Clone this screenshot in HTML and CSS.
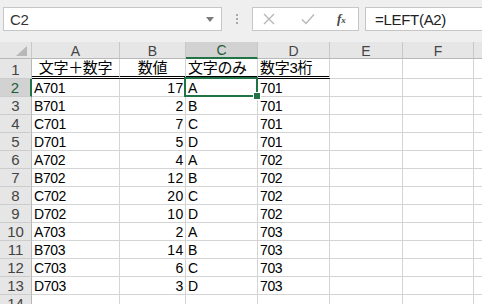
FILE: index.html
```html
<!DOCTYPE html>
<html lang="ja">
<head>
<meta charset="utf-8">
<link rel="stylesheet" href="styles.css">
</head>
<body>
<div class="app">
  <div class="fbar">
    <div class="namebox">
      <span class="ref">C2</span>
      <svg class="dd" width="8" height="5" viewBox="0 0 8 5"><path d="M0 0h8L4 5z" fill="#7a7a7a"/></svg>
    </div>
    <div class="grip"><i></i><i></i><i></i></div>
    <div class="fxbox">
      <svg class="ic" width="12" height="12" viewBox="0 0 12 12"><path d="M1 1L11 11M11 1L1 11" stroke="#b5b5b5" stroke-width="1.3" fill="none"/></svg>
      <svg class="ic" width="14" height="12" viewBox="0 0 14 12"><path d="M1 6.5L5 10.5L13 1.5" stroke="#b5b5b5" stroke-width="1.3" fill="none"/></svg>
      <span class="fx">f<small>x</small></span>
    </div>
    <div class="formula">=LEFT(A2)</div>
  </div>
  <div class="sheet">
    <div class="hd corner"><svg width="11" height="10" viewBox="0 0 11 10"><path d="M11 0V10H0z" fill="#b8b8b8"/></svg></div>
    <div class="hd">A</div><div class="hd">B</div><div class="hd sel-col">C</div><div class="hd">D</div><div class="hd">E</div><div class="hd">F</div><div class="hd"></div>

    <div class="rh">1</div><div class="c ctr u">文字＋数字</div><div class="c ctr u">数値</div><div class="c u">文字のみ</div><div class="c u">数字3桁</div><div class="c"></div><div class="c"></div><div class="c"></div>

    <div class="rh sel-row">2</div><div class="c">A701</div><div class="c num">17</div><div class="c active">A<span class="selbox"><span class="handle"></span></span></div><div class="c">701</div><div class="c"></div><div class="c"></div><div class="c"></div>
    <div class="rh">3</div><div class="c">B701</div><div class="c num">2</div><div class="c">B</div><div class="c">701</div><div class="c"></div><div class="c"></div><div class="c"></div>
    <div class="rh">4</div><div class="c">C701</div><div class="c num">7</div><div class="c">C</div><div class="c">701</div><div class="c"></div><div class="c"></div><div class="c"></div>
    <div class="rh">5</div><div class="c">D701</div><div class="c num">5</div><div class="c">D</div><div class="c">701</div><div class="c"></div><div class="c"></div><div class="c"></div>
    <div class="rh">6</div><div class="c">A702</div><div class="c num">4</div><div class="c">A</div><div class="c">702</div><div class="c"></div><div class="c"></div><div class="c"></div>
    <div class="rh">7</div><div class="c">B702</div><div class="c num">12</div><div class="c">B</div><div class="c">702</div><div class="c"></div><div class="c"></div><div class="c"></div>
    <div class="rh">8</div><div class="c">C702</div><div class="c num">20</div><div class="c">C</div><div class="c">702</div><div class="c"></div><div class="c"></div><div class="c"></div>
    <div class="rh">9</div><div class="c">D702</div><div class="c num">10</div><div class="c">D</div><div class="c">702</div><div class="c"></div><div class="c"></div><div class="c"></div>
    <div class="rh">10</div><div class="c">A703</div><div class="c num">2</div><div class="c">A</div><div class="c">703</div><div class="c"></div><div class="c"></div><div class="c"></div>
    <div class="rh">11</div><div class="c">B703</div><div class="c num">14</div><div class="c">B</div><div class="c">703</div><div class="c"></div><div class="c"></div><div class="c"></div>
    <div class="rh">12</div><div class="c">C703</div><div class="c num">6</div><div class="c">C</div><div class="c">703</div><div class="c"></div><div class="c"></div><div class="c"></div>
    <div class="rh">13</div><div class="c">D703</div><div class="c num">3</div><div class="c">D</div><div class="c">703</div><div class="c"></div><div class="c"></div><div class="c"></div>
    <div class="rh">14</div><div class="c"></div><div class="c"></div><div class="c"></div><div class="c"></div><div class="c"></div><div class="c"></div><div class="c"></div>
  </div>
</div>
</body>
</html>
```
FILE: styles.css
```css
* { box-sizing: border-box; }
html, body { margin: 0; padding: 0; }
body {
  width: 482px;
  height: 304px;
  overflow: hidden;
  background: #ffffff;
  font-family: "Liberation Sans", "Noto Sans CJK JP", sans-serif;
  color: #000;
}
.app { width: 482px; height: 304px; overflow: hidden; }

.fbar {
  height: 42px;
  background: #efefef;
  display: flex;
  align-items: flex-start;
  padding: 7px 0 0 3px;
}
.namebox {
  width: 219px;
  height: 24px;
  background: #fff;
  border: 1px solid #c6c6c6;
  display: flex;
  align-items: center;
  justify-content: space-between;
  padding: 0 7px 0 6px;
}
.ref { font-size: 15px; color: #333; letter-spacing: -0.3px; }
.dd { margin-top: 1px; }
.grip {
  width: 30px;
  height: 24px;
  display: flex;
  flex-direction: column;
  align-items: center;
  justify-content: center;
  gap: 2px;
}
.grip i { display: block; width: 2px; height: 2px; background: #a8a8a8; }
.fxbox {
  width: 107px;
  height: 24px;
  background: #fff;
  border: 1px solid #c6c6c6;
  display: flex;
  align-items: center;
  padding-left: 10px;
  gap: 0;
}
.fxbox .ic:first-child { margin-right: 26px; }
.fxbox .ic:nth-child(2) { margin-right: 22px; }
.fx {
  font-family: "Liberation Serif", serif;
  font-style: italic;
  font-weight: bold;
  font-size: 13px;
  color: #444;
}
.fx small { font-size: 9px; }
.formula {
  flex: 1;
  height: 24px;
  margin-left: 6px;
  background: #fff;
  border: 1px solid #c6c6c6;
  border-right: none;
  display: flex;
  align-items: center;
  padding-left: 9px;
  font-size: 15px;
  color: #222;
  letter-spacing: -0.3px;
}

.sheet {
  display: grid;
  grid-template-columns: 32px 88px 66px 72px 72px 73px 71px 40px;
  grid-template-rows: 17px 20px repeat(13, 18px);
}
.hd {
  background: #e6e6e6;
  border-right: 1px solid #c8c8c8;
  border-bottom: 1px solid #b8b8b8;
  display: flex;
  align-items: flex-end;
  justify-content: center;
  font-size: 14px;
  line-height: 14px;
  color: #444;
}
.corner { justify-content: flex-end; padding: 0 4px 2px 0; }
.sel-col {
  background: #d2d2d2;
  border-bottom: 2px solid #217346;
  color: #1e5c38;
}
.rh {
  background: #e6e6e6;
  border-right: 1px solid #b8b8b8;
  border-bottom: 1px solid #cccccc;
  display: flex;
  align-items: flex-end;
  justify-content: center;
  font-size: 15px;
  line-height: 16px;
  color: #444;
}
.sel-row {
  background: #d2d2d2;
  border-right: 2px solid #217346;
  color: #1e5c38;
}
.c {
  border-right: 1px solid #d4d4d4;
  border-bottom: 1px solid #d4d4d4;
  display: flex;
  align-items: flex-end;
  padding: 0 2px;
  font-size: 14px;
  line-height: 16px;
  letter-spacing: -0.4px;
  white-space: nowrap;
}
.ctr { justify-content: center; }
.num { justify-content: flex-end; letter-spacing: 0.6px; padding-right: 1px; }
.u {
  border-bottom: 3px double #000;
  font-size: 15px;
  letter-spacing: -0.3px;
  line-height: 17px;
}
.active { position: relative; }
.selbox {
  position: absolute;
  top: -2px;
  left: -2px;
  right: -1px;
  bottom: -1px;
  border: 2px solid #217346;
}
.handle {
  position: absolute;
  right: -4px;
  bottom: -4px;
  width: 6px;
  height: 6px;
  background: #217346;
  outline: 1px solid #fff;
}
```
